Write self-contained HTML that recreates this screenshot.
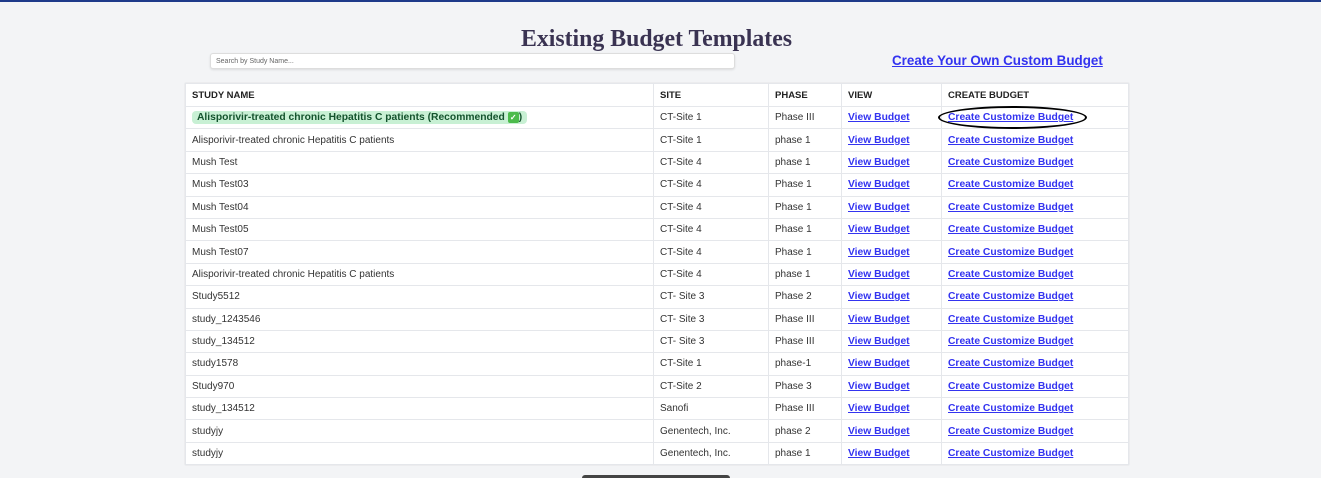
<!DOCTYPE html>
<html><head><style>
body{margin:0;width:1321px;height:478px;background:#f3f4f6;font-family:"Liberation Sans",sans-serif;position:relative;overflow:hidden}
.top{position:absolute;left:0;top:0;width:1321px;height:2px;background:#1e3a8a}
h1{position:absolute;left:0;width:1313px;top:25px;margin:0;text-align:center;font-family:"Liberation Serif",serif;font-size:23.8px;font-weight:bold;color:#3a3352;line-height:28px}
.search{position:absolute;left:210px;top:53px;height:16px;background:#fff;border:1px solid #ddd;border-radius:3px;box-shadow:0 1px 2px rgba(0,0,0,.1);font-size:7px;color:#666;line-height:16px;padding-left:5px;box-sizing:border-box;width:525px}
.cust{position:absolute;left:892px;top:53px;font-size:13.4px;font-weight:bold;color:#3333f0;text-decoration:underline}
table{position:absolute;left:185px;top:83px;width:944px;border-collapse:collapse;background:#fff;font-size:10px;color:#333;box-shadow:0 0 1px #ccc}
td,th{border:1px solid #e5e7eb;height:21.4px;padding:0 0 0 6px;text-align:left;white-space:nowrap}
th{font-size:9.5px;font-weight:bold;color:#222;height:22px}
a{color:#3333f0;font-weight:bold;text-decoration:underline;font-size:10.3px}
.rec{background:#c8f0d4;color:#14532d;font-weight:bold;border-radius:4px;padding:1px 5px;font-size:10.3px}
.chk{display:inline-block;width:11px;height:11px;background:#4cbb4c;color:#fff;font-size:8px;line-height:11px;text-align:center;border-radius:2px}
.ell{position:absolute;left:938px;top:106px;width:149px;height:23px;border:2px solid #000;border-radius:50%;box-sizing:border-box}
.bot{position:absolute;left:582px;top:475px;width:148px;height:3px;background:#444;border-radius:3px 3px 0 0}
</style></head><body>
<div class="top"></div>
<h1>Existing Budget Templates</h1>
<div class="search">Search by Study Name...</div>
<div class="cust">Create Your Own Custom Budget</div>
<table>
<colgroup><col style="width:468px"><col style="width:115px"><col style="width:73px"><col style="width:100px"><col></colgroup>
<tr><th>STUDY NAME</th><th>SITE</th><th>PHASE</th><th>VIEW</th><th>CREATE BUDGET</th></tr>
<tr><td><span class="rec">Alisporivir-treated chronic Hepatitis C patients (Recommended <span class="chk">✓</span>)</span></td><td>CT-Site 1</td><td>Phase III</td><td><a>View Budget</a></td><td><a>Create Customize Budget</a></td></tr>
<tr><td>Alisporivir-treated chronic Hepatitis C patients</td><td>CT-Site 1</td><td>phase 1</td><td><a>View Budget</a></td><td><a>Create Customize Budget</a></td></tr>
<tr><td>Mush Test</td><td>CT-Site 4</td><td>phase 1</td><td><a>View Budget</a></td><td><a>Create Customize Budget</a></td></tr>
<tr><td>Mush Test03</td><td>CT-Site 4</td><td>Phase 1</td><td><a>View Budget</a></td><td><a>Create Customize Budget</a></td></tr>
<tr><td>Mush Test04</td><td>CT-Site 4</td><td>Phase 1</td><td><a>View Budget</a></td><td><a>Create Customize Budget</a></td></tr>
<tr><td>Mush Test05</td><td>CT-Site 4</td><td>Phase 1</td><td><a>View Budget</a></td><td><a>Create Customize Budget</a></td></tr>
<tr><td>Mush Test07</td><td>CT-Site 4</td><td>Phase 1</td><td><a>View Budget</a></td><td><a>Create Customize Budget</a></td></tr>
<tr><td>Alisporivir-treated chronic Hepatitis C patients</td><td>CT-Site 4</td><td>phase 1</td><td><a>View Budget</a></td><td><a>Create Customize Budget</a></td></tr>
<tr><td>Study5512</td><td>CT- Site 3</td><td>Phase 2</td><td><a>View Budget</a></td><td><a>Create Customize Budget</a></td></tr>
<tr><td>study_1243546</td><td>CT- Site 3</td><td>Phase III</td><td><a>View Budget</a></td><td><a>Create Customize Budget</a></td></tr>
<tr><td>study_134512</td><td>CT- Site 3</td><td>Phase III</td><td><a>View Budget</a></td><td><a>Create Customize Budget</a></td></tr>
<tr><td>study1578</td><td>CT-Site 1</td><td>phase-1</td><td><a>View Budget</a></td><td><a>Create Customize Budget</a></td></tr>
<tr><td>Study970</td><td>CT-Site 2</td><td>Phase 3</td><td><a>View Budget</a></td><td><a>Create Customize Budget</a></td></tr>
<tr><td>study_134512</td><td>Sanofi</td><td>Phase III</td><td><a>View Budget</a></td><td><a>Create Customize Budget</a></td></tr>
<tr><td>studyjy</td><td>Genentech, Inc.</td><td>phase 2</td><td><a>View Budget</a></td><td><a>Create Customize Budget</a></td></tr>
<tr><td>studyjy</td><td>Genentech, Inc.</td><td>phase 1</td><td><a>View Budget</a></td><td><a>Create Customize Budget</a></td></tr>
</table>
<div class="ell"></div>
<div class="bot"></div>
</body></html>
